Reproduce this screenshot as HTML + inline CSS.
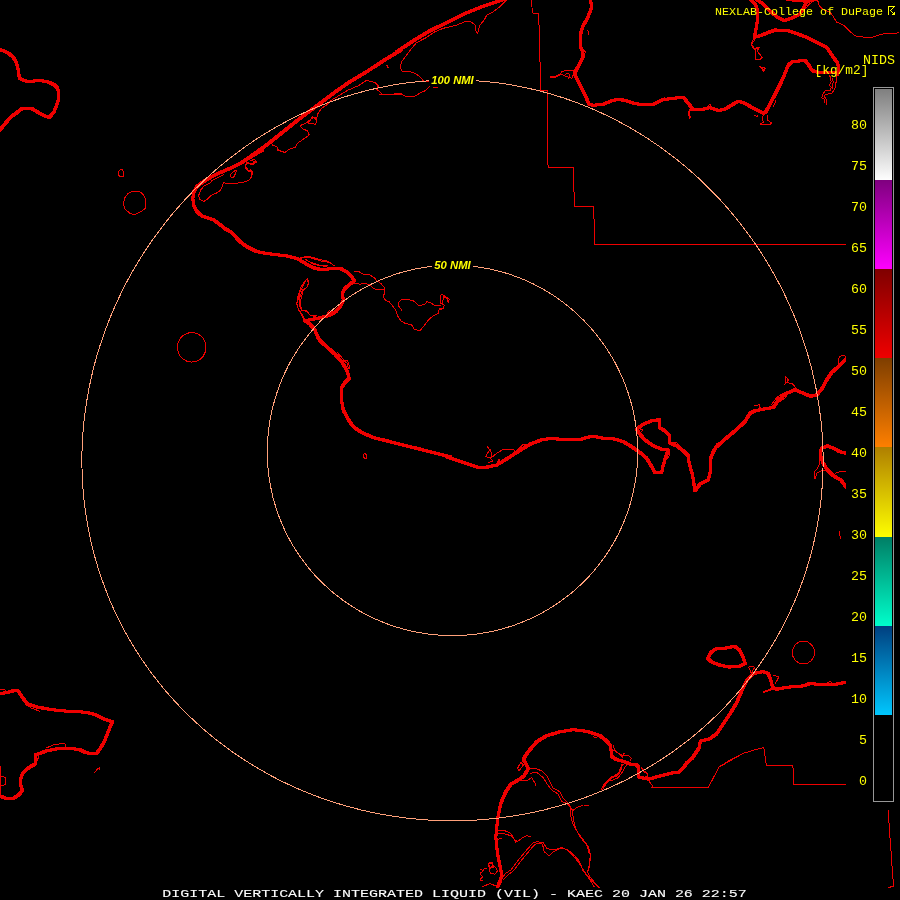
<!DOCTYPE html>
<html><head><meta charset="utf-8"><title>KAEC Digital VIL</title>
<style>
html,body{margin:0;padding:0;background:#000;}
body{width:900px;height:900px;overflow:hidden;}
svg{display:block;}
text{font-family:"Liberation Mono","DejaVu Sans Mono",monospace;}
</style></head><body>
<svg width="900" height="900" viewBox="0 0 900 900">
<defs><linearGradient id="g0" x1="0" y1="0" x2="0" y2="1"><stop offset="0" stop-color="#808080"/><stop offset="1" stop-color="#ffffff"/></linearGradient><linearGradient id="g1" x1="0" y1="0" x2="0" y2="1"><stop offset="0" stop-color="#800080"/><stop offset="1" stop-color="#ff00ff"/></linearGradient><linearGradient id="g2" x1="0" y1="0" x2="0" y2="1"><stop offset="0" stop-color="#800000"/><stop offset="1" stop-color="#f00000"/></linearGradient><linearGradient id="g3" x1="0" y1="0" x2="0" y2="1"><stop offset="0" stop-color="#7f3f00"/><stop offset="1" stop-color="#ff8000"/></linearGradient><linearGradient id="g4" x1="0" y1="0" x2="0" y2="1"><stop offset="0" stop-color="#b08000"/><stop offset="1" stop-color="#ffff00"/></linearGradient><linearGradient id="g5" x1="0" y1="0" x2="0" y2="1"><stop offset="0" stop-color="#007f66"/><stop offset="1" stop-color="#00ffcc"/></linearGradient><linearGradient id="g6" x1="0" y1="0" x2="0" y2="1"><stop offset="0" stop-color="#004080"/><stop offset="1" stop-color="#00c8ff"/></linearGradient><filter id="dil" filterUnits="userSpaceOnUse" x="0" y="0" width="900" height="900"><feMorphology operator="dilate" radius="1"/></filter>
<clipPath id="mapclip"><path d="M0 0H900V46H846V810H900V888H0Z"/></clipPath>
</defs>
<rect width="900" height="900" fill="#000"/>
<g clip-path="url(#mapclip)">
<g fill="none" stroke="#ee0000" stroke-width="1" stroke-linejoin="round" stroke-linecap="square" shape-rendering="crispEdges">
<path d="M118.3 172.5L119.7 170.0L122.5 169.5L123.8 172.5L123.3 176.3L120.0 176.7L118.3 174.7Z M123.3 203.3L125.0 197.5L128.3 193.3L133.3 191.2L139.5 191.3L143.7 195.0L145.8 200.0L145.3 208.3L140.8 211.7L134.2 214.7L130.0 213.3L125.0 209.2Z M250.0 163.3L245.8 164.2L245.0 168.3L247.5 170.8L250.0 171.3 M272.5 145.0L276.7 146.7L278.3 150.0L285.0 152.5L289.2 149.2L295.0 147.5L297.5 143.3L303.3 139.2L309.2 135.0L307.5 130.8L303.3 129.2L300.0 125.8L306.7 122.5L313.3 117.5L316.7 118.3L317.5 114.2L321.7 108.3L326.7 105.0L331.7 100.0L340.0 95.0L348.3 90.0L358.3 85.8L366.7 80.3L375.0 82.5L378.3 85.8L376.7 89.2L382.5 94.2L392.5 94.2L401.7 93.3 M308.3 123.3L315.8 124.2L316.7 120.0L312.5 116.7Z M386.7 65.0L388.0 67.5 M250.0 160.0L255.8 161.7L253.3 164.2L250.0 164.2 M250.0 169.2L252.5 171.7L251.7 176.7L250.0 178.3 M507.5 -0.8L500.0 6.7L493.3 11.7L486.7 15.0L484.2 20.0L480.0 25.0L477.5 33.3L475.0 29.2L475.0 25.0L470.8 21.7L465.0 21.7L456.7 25.0L450.0 26.7L443.3 28.3L435.0 31.7L425.0 38.3L416.7 42.5L411.7 48.3L406.7 55.0L401.7 61.7L400.0 66.7L402.5 71.7L409.2 71.3L415.0 73.3L420.0 76.7L423.3 80.8L428.3 81.7 M380.0 94.2L391.7 94.7L401.7 94.2L406.7 96.7L413.3 96.7L418.3 94.2L420.8 92.5L425.0 90.8L429.2 86.7 M433.3 87.5L437.5 87.5 M385.8 65.0L388.3 67.5 M531.3 -0.8L532.5 13.0L538.7 13.3L539.7 50.0L540.8 90.5L547.5 90.8L547.5 150.8 M558.3 75.3L561.7 74.2L566.7 76.7L571.7 78.3L573.3 75.0L573.3 70.0L566.7 70.0L561.7 71.7L560.0 75.0 M565.8 74.2L568.3 73.3L570.0 75.8L568.3 78.0 M588.0 30.8L588.3 34.2 M583.3 50.0L585.8 52.0L584.2 54.2 M755.0 39.2L751.7 44.2L754.2 48.3L758.3 47.5L757.5 51.7L762.5 57.5L760.0 59.2L755.8 59.2L755.0 50.0L754.2 48.3 M759.2 66.7L765.0 68.3L763.3 71.3L761.7 68.3 M763.3 115.0L762.5 118.3L763.3 122.5L760.0 124.2L764.2 125.0L770.0 124.7L771.7 123.0L767.5 120.0L767.5 115.0 M754.2 115.0L756.7 116.7L758.3 115.0 M773.3 106.7L775.8 101.7L775.0 100.0 M707.5 106.7L709.7 104.2L711.7 106.7 M662.5 100.0L664.2 97.5L665.8 99.2 M817.8 -0.6L818.3 4.4L821.1 7.8L824.4 10.0L830.0 12.2L833.3 16.7L836.7 22.2L840.0 23.6 M805.6 8.9L808.9 4.4L813.3 1.1L816.7 0.0 M753.9 38.9L751.1 43.3L752.8 47.8L756.7 48.9L759.4 47.2L757.2 51.1L762.2 57.8L760.0 59.4L755.6 59.4L755.0 48.9 M759.4 66.7L765.6 68.3L763.9 71.1L762.2 68.3 M840.0 23.5L843.3 25.0L848.3 30.0L855.0 35.8L863.3 37.0L870.0 38.0L876.7 35.8L881.7 34.2L888.3 33.3L895.0 33.7L898.3 32.5 M547.5 150.0L547.5 160.8L548.3 167.2L573.7 167.2L574.2 206.3L593.3 206.3L594.2 222.5L594.7 244.5L846.0 244.5 M304.2 257.0L309.2 256.3L317.5 259.0L325.8 260.8L330.8 262.5 M306.7 260.0L313.3 264.2L321.7 265.8L326.7 266.7 M304.2 318.3L302.5 315.0L298.3 309.2L296.7 304.2L298.7 298.3L300.0 291.7L302.5 286.7L305.0 281.7L307.5 278.3L308.7 281.7L307.5 286.7L303.3 290.0L301.7 296.7L300.0 303.3L301.7 310.0L306.7 311.7L310.0 315.0L316.7 315.8 M300.0 257.5L310.0 257.5L320.0 260.8L330.0 262.5L334.2 265.8 M305.8 260.0L313.3 263.3L320.8 265.8L327.5 265.8 M304.2 320.0L301.7 315.0L298.3 309.2L296.7 303.3L298.3 295.0L300.8 287.5L304.2 281.7L307.5 278.3L308.3 283.3L306.7 287.5L302.5 290.0L300.0 296.7L299.2 305.0L301.7 310.8L305.8 310.0L310.0 315.0L315.0 316.7 M354.2 271.7L358.3 271.2L363.3 274.2L370.0 275.0L375.0 278.3L376.7 280.8L380.8 283.3L384.2 287.5L385.0 291.7L383.3 296.7L385.8 300.8L389.2 301.7L392.5 305.8L395.8 310.0L397.5 315.8L400.8 320.8L405.0 323.3L411.7 325.0L414.2 329.2L420.0 330.8L423.3 326.7L428.3 320.0L433.3 315.8L438.3 313.3L439.2 309.2L440.8 308.0 M354.2 283.3L360.0 284.2L365.0 283.3L370.0 285.0L373.3 288.3L378.3 290.0L383.3 289.2 M401.7 310.0L399.2 307.5L398.3 302.5L400.8 300.0L406.7 299.2L413.3 300.8L416.7 303.3L418.3 305.8L425.0 304.2L426.7 301.7L431.7 303.3L435.0 305.8L440.8 305.0 M330.0 310.0L327.5 313.3L332.5 311.7 M337.5 352.5L341.7 357.5L345.0 361.7L347.5 363.3L348.3 368.3L350.0 369.2 M439.2 310.0L443.3 308.3L444.2 305.0L440.8 303.3L440.0 296.7L441.7 294.2L445.8 296.7L449.2 299.2L448.3 302.5L446.7 298.3L443.3 296.7L442.5 305.0 M363.3 454.2L365.8 453.3L366.7 458.3L364.2 458.3Z M337.5 352.5L340.0 355.8L344.2 360.0L347.5 360.8L350.0 368.3L347.5 366.7 M487.5 446.7L490.0 450.0L486.7 454.2L485.8 456.7L490.8 458.3L491.7 453.3L490.0 449.2 M490.8 458.3L496.7 453.3L503.3 449.2L513.3 449.2L515.0 451.7L520.0 447.5L523.3 444.2L530.0 444.2 M488.3 462.8L492.5 461.2L491.7 459.7 M497.5 461.7L500.0 460.0L498.3 459.2 M668.3 450.0L670.0 455.0L667.5 458.3 M671.7 443.3L676.7 442.5L679.2 445.8 M639.2 428.3L642.5 430.0L640.8 432.5 M785.0 384.2L785.8 376.7L788.3 380.0L786.7 382.5L793.3 384.2L795.8 388.3 M755.0 405.8L759.2 404.7L760.0 407.5 M838.3 363.3L839.2 356.7L843.3 355.3L846.0 356.7 M819.2 456.7L819.2 465.0L816.7 469.2L814.2 471.7L815.0 479.2L816.7 473.3L821.7 470.8L825.0 470.8 M835.0 473.3L840.0 471.7L846.0 471.7 M771.7 404.2L776.7 397.5L783.3 393.3L790.0 390.8 M780.0 401.7L786.7 396.7 M0.5 766.0L0.5 796.0 M0.0 775.4L5.1 777.6L5.8 784.1L2.9 785.6L0.7 785.3 M46.2 748.0L53.4 744.8L60.7 743.7L65.0 744.0L65.7 747.3 M26.0 704.7L31.8 708.3L39.7 711.2 M94.6 772.6L97.5 768.9L99.7 767.5L99.4 769.7 M36.1 754.5L39.0 756.7L36.8 761.0 M0.0 689.5L4.3 689.5L7.2 691.7L2.9 693.1 M528.3 769.2L535.0 768.3L541.7 770.8L546.7 775.8L550.0 781.7L553.3 788.3L560.0 791.7L563.3 798.3L566.7 801.7L570.8 806.7L570.8 816.7L573.3 825.0L578.3 833.3L583.3 840.0L588.3 846.7L590.8 856.7L589.2 865.0L588.3 870.0 M530.0 773.3L536.7 772.5L543.3 777.5L546.7 783.3L551.7 790.0L558.3 794.2L561.7 801.7L566.7 803.3L572.5 810.0L573.3 820.0L575.8 828.3L580.0 836.7L586.7 845.0L589.2 853.3 M572.5 810.8L576.7 807.5L583.3 805.0L588.3 805.3 M521.7 780.8L528.3 780.0L531.7 777.5L535.0 783.3L535.8 785.0 M498.3 830.8L505.0 830.8L510.8 833.3L514.2 839.2L517.5 841.7L522.5 837.5L526.7 835.8L530.8 836.7 M498.3 833.3L506.7 834.2L512.5 836.7L515.8 842.5 M497.5 839.2L501.7 838.7 M510.8 870.0L518.3 860.0L526.7 850.0L533.3 842.5L538.3 841.7L542.5 844.2L544.2 851.7L549.2 855.8L553.3 851.7L560.0 848.3L566.7 849.2L572.5 853.3L578.3 860.0L581.7 866.7L582.5 870.0 M514.2 870.0L521.7 860.0L530.0 850.0L535.0 844.2L543.3 842.5L546.7 848.3L553.3 850.0L561.7 847.5L568.3 850.8L573.3 855.8L579.2 863.3 M603.3 788.3L606.7 781.7L613.3 776.7L620.0 771.7L622.5 765.0L626.7 762.5 M602.5 790.0L605.8 784.2L611.7 778.3L618.3 775.0L621.7 768.3 M613.3 750.0L618.3 753.3L623.3 755.8L624.2 753.3 M517.5 768.3L520.8 762.5L523.3 765.0L519.2 770.8Z M488.3 863.3L491.7 862.5L492.5 866.7L489.2 867.5Z M483.3 869.2L486.7 868.3 M497.5 886.7L490.0 883.5L482.5 886.7 M582.5 870.0L585.0 873.3L590.0 880.0L594.2 886.7 M579.2 863.3L583.3 870.0L586.7 875.0L593.3 882.5L599.2 887.5 M589.0 858.0L590.0 865.0L587.5 871.7L590.0 876.7L595.0 883.3L598.3 887.5 M510.8 870.0L505.8 873.3L501.7 878.3 M514.2 870.0L508.0 875.0L503.0 880.0 M488.3 864.2L492.5 862.5L493.3 866.7L490.0 867.5Z M490.0 868.3L495.0 866.7L497.5 870.8L495.0 874.2L490.8 873.3L489.2 870.0Z M480.8 869.2L483.3 870.8L480.0 873.3L482.5 876.7L480.0 880.0L482.5 880.8 M641.0 767.0L643.5 771.0L647.5 774.5L648.0 776.0 M648.7 780.4L650.9 784.0L653.1 786.2L651.8 787.6L708.2 787.6L719.2 767.0L740.8 754.7 M814.6 652.5L813.8 656.9L811.3 660.6L807.7 663.0L803.4 663.9L799.1 663.0L795.5 660.6L793.1 656.9L792.2 652.5L793.1 648.2L795.5 644.5L799.1 642.0L803.4 641.2L807.7 642.0L811.3 644.5L813.8 648.2Z M712.2 780.0L719.3 766.7L730.9 759.6L743.3 753.3L754.0 750.1L763.8 747.6L766.4 765.4L792.8 765.4L794.0 780.0 M748.7 667.1L751.3 673.3L754.9 667.1L749.6 666.6 M773.6 675.1L778.9 676.9L777.1 680.4L775.3 683.1 M827.8 682.6L830.4 681.3L832.2 683.1 M794.0 780.0L793.7 784.5L850.0 784.5 M888.3 810.0L889.2 826.7L890.8 848.3L892.5 873.3L893.7 886.3L888.3 887.5 M839.3 531.5L840.5 538.5 M206.0 347.3L205.3 351.9L203.3 356.0L200.1 359.3L196.1 361.4L191.7 362.1L187.3 361.4L183.3 359.3L180.1 356.0L178.1 351.9L177.4 347.3L178.1 342.7L180.1 338.6L183.3 335.3L187.3 333.2L191.7 332.5L196.1 333.2L200.1 335.3L203.3 338.6L205.3 342.7Z M601.1 789.3L603.8 785.8L605.6 782.2L609.1 779.6L611.8 776.9L616.2 776.9L618.9 773.3L619.8 769.8L621.6 766.2L622.0 764.0 M603.3 788.4L605.1 784.9L608.2 781.3L612.7 780.0L618.0 777.8L621.6 773.3L624.2 768.4L626.9 764.4 M613.6 745.8L614.4 750.2L618.0 752.9L620.7 755.1L622.4 757.3L623.3 753.8L624.7 755.6L628.7 756.0L631.3 758.2L630.4 760.4 M641.1 767.1L643.8 770.7L647.3 773.3L647.8 776.0L645.6 776.9 M593.6 736.4L594.9 738.2L596.7 737.3 M224.0 174.7L221.3 176.0L216.0 178.7L211.3 180.7L210.7 182.7L204.0 186.0L200.7 190.0L198.7 195.3L199.3 199.3L204.0 201.3L208.0 198.7L211.3 195.3L216.0 193.3L220.0 190.7L222.7 186.0L223.3 182.7L230.0 184.0L236.0 183.1L242.7 182.7L249.3 180.0L252.0 176.7L251.3 171.3L248.0 170.0L245.3 166.0L246.7 162.7L252.0 163.3L256.7 162.0L254.7 159.3L252.0 160.0 M230.0 174.7L231.3 177.3L233.3 178.0L235.3 174.0L236.7 170.0L234.0 171.3L232.0 173.3Z M277.3 150.0L281.3 151.3L284.7 152.7L287.3 150.7 M836.1 76.7L836.7 79.4L836.1 82.2L835.3 85.0L835.0 88.3L833.3 91.1L831.7 93.3L828.3 93.9L825.6 94.4L823.9 96.1L825.6 98.3L826.7 100.0L826.1 102.2L826.7 104.4 M829.7 75.6L830.6 78.3L831.1 81.7L829.4 85.6L831.1 87.2L830.6 90.0L828.3 90.6L825.6 90.6L823.3 93.3L822.5 96.1L821.4 97.5L823.9 98.9L824.7 101.1L825.0 102.8 M832.2 78.3L833.3 82.2L832.2 86.1L832.8 88.9"/>
<path d="M550.8 76.7L555.0 77.0L558.3 75.3 M690.0 110.0L688.7 113.3L690.0 117.5 M763.8 692.0L770.0 689.7L773.6 688.4 M603.3 787.1L604.2 784.9" stroke-width="2"/>
<g filter="url(#dil)"><path d="M-1.1 49.1L4.4 51.1L9.4 53.9L13.3 57.2L16.1 62.2L17.8 67.8L18.7 74.4L19.8 78.3L22.8 80.0L26.7 81.3L33.3 81.1L37.8 80.6L42.2 80.8L48.9 82.2L54.4 85.0L57.8 88.3L58.7 94.4L58.0 101.1L56.1 106.7L53.9 112.2L49.4 117.2L46.7 116.7L38.9 112.8L32.2 108.9L23.3 108.3L20.6 109.4L16.7 112.8L11.1 116.7L6.7 121.7L2.2 127.2L-1.1 130.6 M262.7 150.0L252.0 156.0L241.3 162.7L230.7 168.0L220.0 172.7L210.7 177.3L202.7 182.0L196.7 186.7L193.3 192.7L192.9 199.3L194.0 206.0L197.3 212.0L202.0 216.0L208.0 218.0L214.0 220.0L220.0 224.7L226.0 229.3L231.3 232.0L236.0 237.3L241.3 242.7L248.0 247.3L256.0 251.3L265.3 253.3L276.0 254.7L286.7 256.0L294.7 258.0L300.0 259.6 M248.3 158.0L266.7 145.0L283.3 131.7L300.0 118.3L316.7 105.8L333.3 93.3L350.0 81.7L366.7 71.7L383.3 60.8L401.7 49.7 M396.7 51.7L413.3 40.8L430.0 30.8L446.7 22.5L463.3 14.2L480.0 7.5L496.7 1.7L506.7 -1.7 M590.8 -1.7L591.3 8.3L587.5 18.3L582.5 26.7L580.8 33.3L580.0 45.0L582.5 51.7L583.3 56.7L580.0 63.3L575.8 70.8L575.8 76.7L580.0 85.0L585.0 95.0L589.2 104.2L593.3 105.3L603.3 104.2L611.7 100.8L618.3 99.2L626.7 100.8L635.0 103.7L643.3 104.5L651.7 104.5 M639.2 104.5L653.3 104.2L661.7 100.0L673.3 98.3L683.3 97.2L688.3 103.3L693.3 109.7L703.3 109.2L710.0 107.5L718.3 110.5L725.0 109.2L731.7 105.0L738.3 101.3L745.0 103.3L753.3 108.3L763.3 113.3 M750.6 -1.1L755.6 5.0L757.8 11.1L757.2 22.2L755.6 31.1L754.4 37.2L762.2 35.0L768.9 32.2L775.6 30.0L786.7 30.2L795.6 33.3L806.7 37.2L817.8 42.8L826.7 47.2L832.2 55.6L837.8 63.3L838.4 68.0L838.3 72.4L837.0 75.3L838.3 72.4L828.9 72.4L820.0 72.4L815.0 71.8L811.8 70.0L810.0 67.0L805.6 60.9L793.3 61.1L788.9 64.4L786.7 68.9L783.3 77.8L777.8 88.9L772.2 100.0L765.6 112.2L763.3 113.3 M755.6 -1.1L762.2 3.3L768.9 10.0L776.7 16.7L784.4 20.6L792.2 17.8L800.0 13.9L804.4 6.7L806.7 1.7L802.2 0.6L793.3 0.0L786.7 -1.1 M806.7 1.7L812.2 0.0L816.7 -1.1 M299.2 259.7L306.7 264.2L315.0 268.3L323.3 270.0L331.7 268.3L340.0 268.3L346.7 271.7L351.7 276.7L354.2 280.8L350.0 284.2L345.0 288.3L342.5 293.3L343.3 300.0L340.8 305.8L335.8 311.7L330.0 315.0L321.7 317.5L313.3 319.2L305.0 320.8 M305.0 320.8L310.0 324.2L315.0 330.0L317.5 336.7L320.8 341.7 M319.2 340.0L326.7 346.7L335.0 354.2L341.7 361.7L346.7 370.0L349.2 378.3L345.0 382.5L341.7 387.5L341.7 401.7L343.3 410.0L347.5 418.3L353.3 426.7L361.7 432.5L373.3 437.5L386.7 440.8L400.0 444.2L416.7 448.3L433.3 452.5L450.8 457.0 M446.7 456.7L463.3 462.5L478.3 467.5L486.7 467.2L496.7 465.0L505.0 460.0L516.7 452.5L530.0 444.2L543.3 439.2L553.3 438.7L566.7 439.7L580.8 439.7 M569.2 440.0L580.0 439.7L586.7 437.5L593.3 436.3L603.3 438.3L613.3 438.7L623.3 441.7L631.7 446.7L640.0 452.5L646.7 458.3L651.7 466.7L655.0 472.5L661.7 473.0L663.3 465.0L665.8 456.7L668.3 450.0L661.7 449.2L653.3 445.8L645.0 440.0L639.2 433.3L636.7 429.2L643.3 424.2L651.7 420.8L659.2 419.7L659.2 427.5L665.0 430.8L669.2 435.0L670.0 443.3L676.7 445.8L683.3 450.8L688.3 455.8L689.2 463.3L692.5 475.0L695.0 490.8L700.0 484.2L708.3 480.0L710.0 473.3L710.0 460.0L713.3 451.7L717.5 445.0L720.8 443.7 M716.7 446.7L725.0 439.2L735.0 430.8L745.0 421.7L750.0 413.3L755.0 410.8L763.3 409.2L773.3 407.5L778.3 400.0L786.7 393.3L795.0 389.7L803.3 393.3L810.8 396.3L816.7 395.0L821.7 389.2L826.7 380.0L831.7 372.5L838.3 366.7L846.7 358.7 M846.7 453.3L840.0 451.7L833.3 448.3L827.5 445.8L821.7 448.3L820.0 453.3L822.5 461.7L826.7 469.2L833.3 475.8L840.8 480.0L846.7 487.5 M-1.4 694.1L7.2 692.4L13.0 690.9L18.1 690.9L22.4 697.4L27.4 703.9L36.1 706.8L46.2 708.7L57.8 710.4L72.2 711.6L86.7 712.2L95.3 714.8L104.0 719.1L112.7 722.0L109.8 727.8L106.9 735.0L104.0 742.2L99.7 749.4L96.8 753.1L89.6 753.5L85.2 752.3L79.4 749.4L72.2 748.7L63.6 748.0L54.9 749.2L46.2 750.9L39.0 753.8L35.4 754.5L35.4 763.9L28.9 767.5L23.1 772.6L20.2 779.8L20.9 785.6L22.4 790.6L18.8 794.9L13.0 798.6L5.8 798.3L-1.4 795.4 M500.8 870.0L497.5 853.3L495.8 836.7L497.5 820.0L500.8 803.3L505.8 791.7L510.8 784.2L518.3 780.0L524.2 775.8L528.3 768.3L525.8 763.3L523.3 759.2L528.3 751.7L536.7 741.7L546.7 735.8L560.0 731.7L573.3 729.7L586.7 731.3L600.0 735.8 M500.8 870.0L501.7 873.0L500.8 880.0L497.5 886.7 M600.0 735.8L605.6 740.0L610.0 744.9L611.3 751.1L611.8 756.4L616.2 759.6L623.3 761.3L630.4 764.0L635.3 764.0L638.9 767.1L638.0 772.4L638.4 776.9L643.3 778.2L648.7 779.1L656.7 776.9L665.6 774.7L672.7 772.9L678.9 772.0L683.3 768.0L686.9 762.7L692.2 758.2L695.8 752.9L699.3 747.6L700.2 741.3L704.7 740.0L710.0 738.7L716.7 733.8 M716.7 733.8L723.8 723.1L730.9 712.4L737.1 701.8L741.6 691.1L746.9 680.4L754.0 673.3L762.9 671.6L768.2 673.3L770.9 680.4L772.7 687.6L777.1 689.3L786.0 687.2L796.7 686.7L803.8 685.8L810.9 683.1L819.8 684.9L832.2 684.9L841.1 683.1L847.3 682.4 M707.8 658.2L711.3 652.0L716.7 648.4L725.6 648.1L734.4 646.3L739.8 650.2L743.3 657.3L745.1 663.6L739.8 666.2L729.1 667.1L720.2 665.3L711.3 661.8Z"/></g>
</g>
<g fill="none" stroke="#ffa07a" stroke-width="1" shape-rendering="crispEdges"><path d="M822.9 448.8L823.1 455.2L823.1 461.7L823.0 468.2L822.8 474.6L822.5 481.1L822.1 487.5L821.6 493.9L821.0 500.4L820.2 506.8L819.3 513.1L818.3 519.5L817.3 525.8L816.0 532.2L814.7 538.5L813.3 544.7L811.7 551.0L810.1 557.2L808.3 563.4L806.4 569.5L804.4 575.6L802.3 581.7L800.1 587.7L797.8 593.7L795.4 599.7L792.8 605.6L790.2 611.4L787.4 617.3L784.5 623.0L781.6 628.7L778.5 634.4L775.3 640.0L772.0 645.5L768.6 651.0L765.2 656.4L761.6 661.7L757.9 667.0L754.1 672.3L750.2 677.4L746.2 682.5L742.2 687.5L738.0 692.5L733.7 697.3L729.4 702.1L725.0 706.8L720.4 711.5L715.8 716.0L711.1 720.5L706.3 724.9L701.5 729.2L696.5 733.4L691.5 737.6L686.4 741.6L681.2 745.6L675.9 749.5L670.6 753.3L665.2 756.9L659.7 760.5L654.2 764.0L648.6 767.4L642.9 770.7L637.2 773.9L631.4 777.1L625.5 780.1L619.6 783.0L613.6 785.8L607.6 788.5L601.6 791.1L595.4 793.6L589.3 796.0L583.1 798.2L576.8 800.4L570.5 802.5L564.2 804.4L557.8 806.3L551.4 808.0L544.9 809.7L538.5 811.2L532.0 812.6L525.4 813.9L518.9 815.1L512.3 816.2L505.7 817.1L499.1 818.0L492.5 818.7L485.8 819.3L479.2 819.9L472.5 820.3L465.8 820.5L459.2 820.7L452.5 820.8L445.8 820.7L439.2 820.5L432.5 820.3L425.8 819.9L419.2 819.3L412.5 818.7L405.9 818.0L399.3 817.1L392.7 816.2L386.1 815.1L379.6 813.9L373.0 812.6L366.5 811.2L360.1 809.7L353.6 808.0L347.2 806.3L340.8 804.4L334.5 802.5L328.2 800.4L321.9 798.2L315.7 796.0L309.6 793.6L303.4 791.1L297.4 788.5L291.4 785.8L285.4 783.0L279.5 780.1L273.6 777.1L267.8 773.9L262.1 770.7L256.4 767.4L250.8 764.0L245.3 760.5L239.8 756.9L234.4 753.3L229.1 749.5L223.8 745.6L218.6 741.6L213.5 737.6L208.5 733.4L203.5 729.2L198.7 724.9L193.9 720.5L189.2 716.0L184.6 711.5L180.0 706.8L175.6 702.1L171.3 697.3L167.0 692.5L162.8 687.5L158.8 682.5L154.8 677.4L150.9 672.3L147.1 667.0L143.4 661.7L139.8 656.4L136.4 651.0L133.0 645.5L129.7 640.0L126.5 634.4L123.4 628.7L120.5 623.0L117.6 617.3L114.8 611.4L112.2 605.6L109.6 599.7L107.2 593.7L104.9 587.7L102.7 581.7L100.6 575.6L98.6 569.5L96.7 563.4L94.9 557.2L93.3 551.0L91.7 544.7L90.3 538.5L89.0 532.2L87.7 525.8L86.7 519.5L85.7 513.1L84.8 506.8L84.0 500.4L83.4 493.9L82.9 487.5L82.5 481.1L82.2 474.6L82.0 468.2L81.9 461.7L81.9 455.2L82.1 448.8L82.4 442.3L82.7 435.8L83.2 429.4L83.8 422.9L84.6 416.5L85.4 410.1L86.3 403.7L87.4 397.3L88.5 390.9L89.8 384.5L91.2 378.2L92.6 371.8L94.2 365.5L95.9 359.3L97.7 353.0L99.6 346.8L101.7 340.6L103.8 334.5L106.0 328.3L108.3 322.3L110.7 316.2L113.3 310.2L115.9 304.3L118.6 298.4L121.4 292.5L124.3 286.7L127.3 280.9L130.4 275.2L133.6 269.6L136.9 264.0L140.3 258.4L143.8 252.9L147.4 247.5L151.0 242.1L154.7 236.8L158.6 231.6L162.5 226.4L166.5 221.3L170.5 216.3L174.7 211.3L178.9 206.5L183.2 201.6L187.6 196.9L192.1 192.2L196.6 187.7L201.2 183.2L205.9 178.7L210.6 174.4L215.5 170.1L220.3 166.0L225.3 161.9L230.3 157.9L235.4 154.0L240.5 150.2L245.7 146.4L251.0 142.8L256.3 139.2L261.6 135.8L267.0 132.4L272.5 129.2L278.0 126.0L283.6 123.0L289.2 120.0L294.9 117.1L300.6 114.4L306.3 111.7L312.1 109.2L317.9 106.7L323.8 104.4L329.7 102.1L335.6 100.0L341.6 97.9L347.6 96.0L353.6 94.2L359.6 92.5L365.7 90.9L371.8 89.4L377.9 88.0L384.1 86.7L390.2 85.5L396.4 84.5L402.6 83.5L408.8 82.7L415.0 82.0L421.3 81.4L427.5 80.9L433.7 80.5L440.0 80.2L446.2 80.0L452.5 80.0L458.8 80.0L465.0 80.2L471.3 80.5L477.5 80.9L483.7 81.4L490.0 82.0L496.2 82.7L502.4 83.5L508.6 84.5L514.8 85.5L520.9 86.7L527.1 88.0L533.2 89.4L539.3 90.9L545.4 92.5L551.4 94.2L557.4 96.0L563.4 97.9L569.4 100.0L575.3 102.1L581.2 104.4L587.1 106.7L592.9 109.2L598.7 111.7L604.4 114.4L610.1 117.1L615.8 120.0L621.4 123.0L627.0 126.0L632.5 129.2L638.0 132.4L643.4 135.8L648.7 139.2L654.0 142.8L659.3 146.4L664.5 150.2L669.6 154.0L674.7 157.9L679.7 161.9L684.7 166.0L689.5 170.1L694.4 174.4L699.1 178.7L703.8 183.2L708.4 187.7L712.9 192.2L717.4 196.9L721.8 201.6L726.1 206.5L730.3 211.3L734.5 216.3L738.5 221.3L742.5 226.4L746.4 231.6L750.3 236.8L754.0 242.1L757.6 247.5L761.2 252.9L764.7 258.4L768.1 264.0L771.4 269.6L774.6 275.2L777.7 280.9L780.7 286.7L783.6 292.5L786.4 298.4L789.1 304.3L791.7 310.2L794.3 316.2L796.7 322.3L799.0 328.3L801.2 334.5L803.3 340.6L805.4 346.8L807.3 353.0L809.1 359.3L810.8 365.5L812.4 371.8L813.8 378.2L815.2 384.5L816.5 390.9L817.6 397.3L818.7 403.7L819.6 410.1L820.4 416.5L821.2 422.9L821.8 429.4L822.3 435.8L822.6 442.3Z"/><path d="M637.7 450.0L637.7 453.2L637.7 456.5L637.5 459.7L637.4 462.9L637.2 466.1L636.9 469.4L636.5 472.6L636.2 475.8L635.7 479.0L635.2 482.2L634.6 485.4L634.0 488.5L633.4 491.7L632.6 494.8L631.9 498.0L631.0 501.1L630.1 504.2L629.2 507.3L628.2 510.3L627.1 513.4L626.0 516.4L624.9 519.4L623.6 522.4L622.4 525.4L621.1 528.3L619.7 531.3L618.3 534.2L616.8 537.0L615.3 539.9L613.7 542.7L612.1 545.5L610.4 548.2L608.7 551.0L606.9 553.7L605.1 556.3L603.2 559.0L601.3 561.6L599.3 564.2L597.3 566.7L595.3 569.2L593.2 571.7L591.1 574.1L588.9 576.5L586.6 578.8L584.4 581.1L582.1 583.4L579.7 585.6L577.3 587.8L574.9 590.0L572.5 592.1L570.0 594.2L567.4 596.2L564.8 598.1L562.2 600.1L559.6 602.0L556.9 603.8L554.2 605.6L551.5 607.3L548.7 609.0L545.9 610.7L543.1 612.3L540.2 613.8L537.3 615.3L534.4 616.8L531.5 618.2L528.5 619.5L525.5 620.8L522.5 622.0L519.5 623.2L516.4 624.4L513.4 625.4L510.3 626.5L507.2 627.4L504.0 628.4L500.9 629.2L497.7 630.0L494.6 630.8L491.4 631.5L488.2 632.2L485.0 632.7L481.8 633.3L478.5 633.8L475.3 634.2L472.1 634.6L468.8 634.9L465.5 635.1L462.3 635.3L459.0 635.5L455.8 635.5L452.5 635.6L449.2 635.5L446.0 635.5L442.7 635.3L439.5 635.1L436.2 634.9L432.9 634.6L429.7 634.2L426.5 633.8L423.2 633.3L420.0 632.7L416.8 632.2L413.6 631.5L410.4 630.8L407.3 630.0L404.1 629.2L401.0 628.4L397.8 627.4L394.7 626.5L391.6 625.4L388.6 624.4L385.5 623.2L382.5 622.0L379.5 620.8L376.5 619.5L373.5 618.2L370.6 616.8L367.7 615.3L364.8 613.8L361.9 612.3L359.1 610.7L356.3 609.0L353.5 607.3L350.8 605.6L348.1 603.8L345.4 602.0L342.8 600.1L340.2 598.1L337.6 596.2L335.0 594.2L332.5 592.1L330.1 590.0L327.7 587.8L325.3 585.6L322.9 583.4L320.6 581.1L318.4 578.8L316.1 576.5L313.9 574.1L311.8 571.7L309.7 569.2L307.7 566.7L305.7 564.2L303.7 561.6L301.8 559.0L299.9 556.3L298.1 553.7L296.3 551.0L294.6 548.2L292.9 545.5L291.3 542.7L289.7 539.9L288.2 537.0L286.7 534.2L285.3 531.3L283.9 528.3L282.6 525.4L281.4 522.4L280.1 519.4L279.0 516.4L277.9 513.4L276.8 510.3L275.8 507.3L274.9 504.2L274.0 501.1L273.1 498.0L272.4 494.8L271.6 491.7L271.0 488.5L270.4 485.4L269.8 482.2L269.3 479.0L268.8 475.8L268.5 472.6L268.1 469.4L267.8 466.1L267.6 462.9L267.5 459.7L267.3 456.5L267.3 453.2L267.3 450.0L267.4 446.8L267.5 443.5L267.7 440.3L267.9 437.1L268.2 433.9L268.5 430.6L268.9 427.4L269.4 424.2L269.9 421.0L270.4 417.9L271.0 414.7L271.7 411.5L272.5 408.4L273.2 405.2L274.1 402.1L275.0 399.0L275.9 395.9L276.9 392.8L278.0 389.7L279.1 386.7L280.2 383.7L281.4 380.7L282.7 377.7L284.0 374.7L285.4 371.8L286.8 368.9L288.2 366.0L289.7 363.1L291.3 360.3L292.9 357.5L294.6 354.7L296.3 352.0L298.0 349.2L299.8 346.6L301.7 343.9L303.6 341.3L305.5 338.7L307.5 336.1L309.5 333.6L311.5 331.1L313.6 328.7L315.8 326.2L318.0 323.9L320.2 321.5L322.5 319.2L324.8 317.0L327.1 314.8L329.5 312.6L331.9 310.4L334.4 308.3L336.9 306.3L339.4 304.3L341.9 302.3L344.5 300.4L347.1 298.5L349.8 296.7L352.5 294.9L355.2 293.2L357.9 291.5L360.7 289.9L363.5 288.3L366.3 286.8L369.2 285.3L372.0 283.8L374.9 282.5L377.9 281.1L380.8 279.8L383.8 278.6L386.7 277.4L389.8 276.3L392.8 275.2L395.8 274.2L398.9 273.2L401.9 272.3L405.0 271.5L408.1 270.6L411.2 269.9L414.4 269.2L417.5 268.6L420.7 268.0L423.8 267.4L427.0 267.0L430.2 266.5L433.3 266.2L436.5 265.9L439.7 265.6L442.9 265.4L446.1 265.3L449.3 265.2L452.5 265.2L455.7 265.2L458.9 265.3L462.1 265.4L465.3 265.6L468.5 265.9L471.7 266.2L474.8 266.5L478.0 267.0L481.2 267.4L484.3 268.0L487.5 268.6L490.6 269.2L493.8 269.9L496.9 270.6L500.0 271.5L503.1 272.3L506.1 273.2L509.2 274.2L512.2 275.2L515.2 276.3L518.3 277.4L521.2 278.6L524.2 279.8L527.1 281.1L530.1 282.5L533.0 283.8L535.8 285.3L538.7 286.8L541.5 288.3L544.3 289.9L547.1 291.5L549.8 293.2L552.5 294.9L555.2 296.7L557.9 298.5L560.5 300.4L563.1 302.3L565.6 304.3L568.1 306.3L570.6 308.3L573.1 310.4L575.5 312.6L577.9 314.8L580.2 317.0L582.5 319.2L584.8 321.5L587.0 323.9L589.2 326.2L591.4 328.7L593.5 331.1L595.5 333.6L597.5 336.1L599.5 338.7L601.4 341.3L603.3 343.9L605.2 346.6L607.0 349.2L608.7 352.0L610.4 354.7L612.1 357.5L613.7 360.3L615.3 363.1L616.8 366.0L618.2 368.9L619.6 371.8L621.0 374.7L622.3 377.7L623.6 380.7L624.8 383.7L625.9 386.7L627.0 389.7L628.1 392.8L629.1 395.9L630.0 399.0L630.9 402.1L631.8 405.2L632.5 408.4L633.3 411.5L634.0 414.7L634.6 417.9L635.1 421.0L635.6 424.2L636.1 427.4L636.5 430.6L636.8 433.9L637.1 437.1L637.3 440.3L637.5 443.5L637.6 446.8Z"/></g>
</g>
<g opacity="0.999">
<rect x="429" y="74" width="47" height="12" fill="#000"/>
<rect x="432" y="259" width="41" height="12" fill="#000"/>
<g fill="#ffff00" font-weight="bold" font-style="italic" style="font-family:'Liberation Sans',sans-serif" font-size="10.6">
<text x="452.5" y="83.8" text-anchor="middle" textLength="42.4" lengthAdjust="spacingAndGlyphs" style="font-family:'Liberation Sans',sans-serif">100 NMI</text>
<text x="452.5" y="268.7" text-anchor="middle" textLength="36.6" lengthAdjust="spacingAndGlyphs" style="font-family:'Liberation Sans',sans-serif">50 NMI</text>
</g>
<rect x="873.5" y="87.5" width="20" height="714" fill="#000" stroke="#989898" stroke-width="1" shape-rendering="crispEdges"/>
<g shape-rendering="crispEdges"><rect x="875" y="89" width="17" height="91" fill="url(#g0)"/><rect x="875" y="180" width="17" height="89" fill="url(#g1)"/><rect x="875" y="269" width="17" height="89" fill="url(#g2)"/><rect x="875" y="358" width="17" height="89" fill="url(#g3)"/><rect x="875" y="447" width="17" height="90" fill="url(#g4)"/><rect x="875" y="537" width="17" height="89" fill="url(#g5)"/><rect x="875" y="626" width="17" height="89" fill="url(#g6)"/></g>
<g fill="#ffff00" font-size="13.3"><text x="867" y="784.9" text-anchor="end">0</text><text x="867" y="743.9" text-anchor="end">5</text><text x="867" y="702.9" text-anchor="end">10</text><text x="867" y="661.9" text-anchor="end">15</text><text x="867" y="620.9" text-anchor="end">20</text><text x="867" y="579.9" text-anchor="end">25</text><text x="867" y="538.9" text-anchor="end">30</text><text x="867" y="497.9" text-anchor="end">35</text><text x="867" y="456.9" text-anchor="end">40</text><text x="867" y="415.9" text-anchor="end">45</text><text x="867" y="374.9" text-anchor="end">50</text><text x="867" y="333.9" text-anchor="end">55</text><text x="867" y="292.9" text-anchor="end">60</text><text x="867" y="251.9" text-anchor="end">65</text><text x="867" y="210.9" text-anchor="end">70</text><text x="867" y="169.9" text-anchor="end">75</text><text x="867" y="128.9" text-anchor="end">80</text>
<text x="895" y="63.8" text-anchor="end">NIDS</text>
</g>
<g fill="#ffff00" font-size="11.67">
<text x="715" y="15">NEXLAB-College of DuPage</text>
</g>
<g fill="#ffff00" font-size="12.83"><text transform="translate(814.6,73.7) scale(1,0.93)">[kg/m2]</text></g>
<path d="M888.5 15V6.5H895M894.5 6.5L890.5 10.5L894.5 14.5" stroke="#ffff00" stroke-width="1" fill="none" shape-rendering="crispEdges"/><path d="M895 11.8V15H892Z" fill="#ffff00" shape-rendering="crispEdges"/>
<g fill="#ffffff" font-size="11.8" stroke="#ffffff" stroke-width="0.1"><text transform="translate(162.2,897) scale(1.2712,1)">DIGITAL VERTICALLY INTEGRATED LIQUID (VIL) - KAEC 20 JAN 26 22:57</text></g>
</g>
</svg>
</body></html>
